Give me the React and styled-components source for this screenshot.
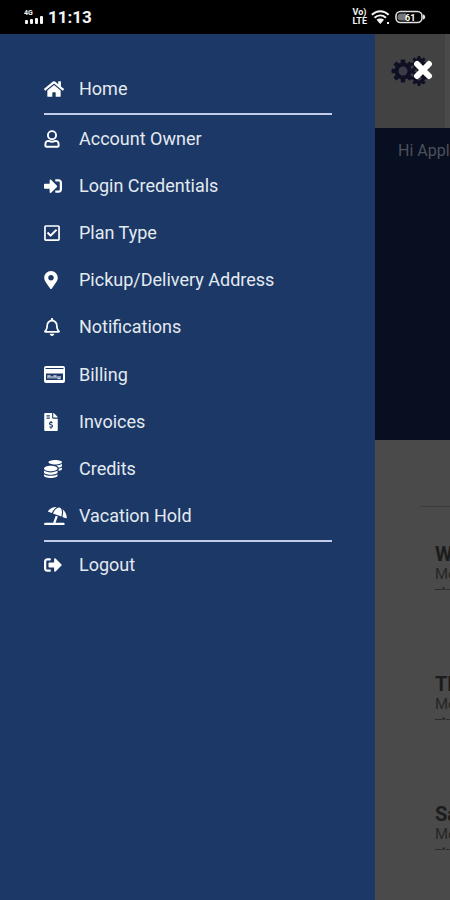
import React from "react";
import styled, { createGlobalStyle } from "styled-components";
import {
  FaHome,
  FaSignInAlt,
  FaRegCheckSquare,
  FaMapMarkerAlt,
  FaRegBell,
  FaFileInvoiceDollar,
  FaCoins,
  FaUmbrellaBeach,
  FaSignOutAlt,
} from "react-icons/fa";

const GlobalStyle = createGlobalStyle`
  * { box-sizing: border-box; }
  body {
    margin: 0;
    background: #4a4a4a;
    font-family: Roboto, "Liberation Sans", sans-serif;
  }
`;

const Screen = styled.div`
  display: flex;
  flex-direction: column;
  min-height: 100vh;
  overflow: hidden;
`;

const StatusBar = styled.header`
  display: flex;
  align-items: center;
  justify-content: space-between;
  height: 34px;
  padding: 0 24px;
  background: #000;
  color: #f4f4f4;
`;

const StatusGroup = styled.div`
  display: flex;
  align-items: center;
  gap: ${({ $gap }) => $gap}px;
`;

const Clock = styled.time`
  font-size: 17px;
  line-height: 20px;
  font-weight: 700;
`;

const SignalStack = styled.div`
  display: flex;
  flex-direction: column;
  font-size: 7px;
  line-height: 6px;
  font-weight: 700;
`;

const VolteLabel = styled.div`
  display: flex;
  flex-direction: column;
  font-size: 9px;
  line-height: 9px;
  font-weight: 700;
`;

const Stage = styled.div`
  display: flex;
  flex: 1;
`;

const Drawer = styled.nav`
  flex: 0 0 83.33%;
  padding: 31px 43px 31px 44px;
  background: #1b3867;
`;

const MenuGroup = styled.ul`
  display: grid;
  grid-auto-rows: 1fr;
  height: ${({ $height }) => $height}px;
  margin: 0;
  padding: 0;
  list-style: none;
  border: 0 solid #c3cbea;
  border-width: ${({ $ruled }) => ($ruled ? "2px 0" : "0")};
`;

const MenuLink = styled.a`
  display: flex;
  align-items: center;
  height: 100%;
  color: #e4eaf0;
  font-size: 18px;
  line-height: 24px;
  font-weight: 400;
  text-decoration: none;
  white-space: nowrap;
`;

const IconSlot = styled.span`
  display: flex;
  flex: 0 0 35px;
  color: #fff;

  svg {
    width: ${({ $width }) => $width}px;
    height: ${({ $height = 18 }) => $height}px;
  }
`;

const Page = styled.main`
  display: flex;
  flex: 1;
  flex-direction: column;
  min-width: 0;
  overflow: hidden;
  background: #4a4a4a;
`;

const Toolbar = styled.div`
  display: flex;
  align-items: flex-start;
  height: 94px;
  margin-right: 5px;
  padding: 22px 0 0 15px;
  background: #424242;
`;

const CloseButton = styled.button`
  display: flex;
  padding: 0;
  border: 0;
  background: none;
`;

const Hero = styled.section`
  height: 312px;
  padding: 13px 0 0 23px;
  background: #080f20;
  color: #4c505b;
  font-size: 16px;
  line-height: 20px;
  white-space: nowrap;
`;

const Schedule = styled.section`
  margin: 66px 0 0 45px;
  padding-top: 36px;
  border-top: 1px solid #3c3c3c;
`;

const Delivery = styled.article`
  height: 130px;
  padding-left: 15px;
  color: #262626;
  white-space: nowrap;
`;

const Day = styled.h2`
  margin: 0;
  font-size: 20px;
  line-height: 23px;
  font-weight: 700;
  color: #1c1c1c;
`;

const Detail = styled.p`
  margin: 0;
  font-size: 15px;
  line-height: 16px;
`;

const Dashes = styled.p`
  margin: 0;
  font-size: 12px;
  line-height: 15px;
`;

const SignalIcon = () => (
  <svg width="19" height="8" viewBox="0 0 19 8" fill="currentColor" aria-hidden="true">
    <rect x="1" y="4" width="3" height="4" rx="1" />
    <rect x="6" y="3" width="3" height="5" rx="1" />
    <rect x="11" y="2" width="3" height="6" rx="1" />
    <rect x="16" y="0" width="3" height="8" rx="1" />
  </svg>
);

const WifiIcon = () => (
  <svg width="20" height="15" viewBox="0 0 20 15" fill="none" stroke="currentColor" strokeWidth="2" aria-hidden="true">
    <path d="M.8 4.800C6-.1 12.500-.1 17.700 4.800M3.500 7.700c3.400-3 8-3 11.500 0" />
    <path d="M5.500 9.800c2-1.800 5.600-1.800 7.500 0L9.300 14z" fill="currentColor" stroke="none" />
    <path d="M16 13h2" />
  </svg>
);

const BatteryIcon = () => (
  <svg width="31" height="14" viewBox="0 0 31 14" aria-hidden="true">
    <rect x="1" y="1.500" width="26" height="11" rx="4.500" fill="none" stroke="#e0e0e0" strokeWidth="1.600" />
    <path d="M6 3.500h5v7H6a3.500 3.500 0 0 1 0-7z" fill="#777" />
    <path d="M28 4.500c3 .5 3 4.500 0 5z" fill="#e0e0e0" />
    <text x="10" y="10.500" fontSize="9" fontWeight="700" fill="#fff">61</text>
  </svg>
);

const OwnerIcon = () => (
  <svg viewBox="0 0 16 19" fill="none" stroke="currentColor" strokeWidth="2" strokeLinejoin="round" aria-hidden="true">
    <circle cx="8" cy="5.500" r="4.300" />
    <path d="M4.500 11.500C2.500 11.500 1 13 1 15v1.500c0 .8.4 1.200 1.200 1.200h11.600c.8 0 1.200-.4 1.200-1.200V15c0-2-1.500-3.500-3.500-3.500-2 1-5 1-7 0z" />
  </svg>
);

const CardIcon = () => (
  <svg viewBox="0 0 21 17" aria-hidden="true">
    <path fill="currentColor" fillRule="evenodd" d="M2 0h17a2 2 0 0 1 2 2v13a2 2 0 0 1-2 2H2a2 2 0 0 1-2-2V2a2 2 0 0 1 2-2zM1.500 2v1h18V2zM2 7.500v6.500h17V7.500z" />
    <path d="M4 12.500V10h2v2.500M8 12.500V10M10 12.500V10h2v2.500M14 10v2.500h2V10" fill="none" stroke="#cbd4e2" strokeWidth="1.300" />
  </svg>
);

const teeth = [0, 45, 90, 135, 180, 225, 270, 315];

const Gear = ({ x, y, r, hub }) => (
  <g transform={`translate(${x} ${y})`}>
    <circle r={r * 0.74} fill="#101024" />
    {teeth.map((angle) => (
      <rect key={angle} x={-r * 0.2} y={-r} width={r * 0.4} height={r * 0.5} rx="1" fill="#101024" transform={`rotate(${angle})`} />
    ))}
    <circle r={hub} fill="#3b3b46" />
  </g>
);

const CloseGears = () => (
  <svg width="43" height="32" viewBox="0 0 43 32" aria-hidden="true">
    <Gear x={13} y={15} r={11.5} hub={4.5} />
    <Gear x={29} y={8} r={8} hub={2.5} />
    <Gear x={29} y={22} r={8} hub={2.5} />
    <path d="m27 8 12 12M39 8 27 20" stroke="#fff" strokeWidth="6" strokeLinecap="round" />
  </svg>
);

const groups = [
  { height: 48, items: [{ label: "Home", Icon: FaHome, width: 20 }] },
  {
    height: 429,
    ruled: true,
    items: [
      { label: "Account Owner", Icon: OwnerIcon, width: 16 },
      { label: "Login Credentials", Icon: FaSignInAlt, width: 18 },
      { label: "Plan Type", Icon: FaRegCheckSquare, width: 16 },
      { label: "Pickup/Delivery Address", Icon: FaMapMarkerAlt, width: 14 },
      { label: "Notifications", Icon: FaRegBell, width: 16 },
      { label: "Billing", Icon: CardIcon, width: 21, iconHeight: 17 },
      { label: "Invoices", Icon: FaFileInvoiceDollar, width: 14 },
      { label: "Credits", Icon: FaCoins, width: 18 },
      { label: "Vacation Hold", Icon: FaUmbrellaBeach, width: 23 },
    ],
  },
  { height: 46, items: [{ label: "Logout", Icon: FaSignOutAlt, width: 18 }] },
];

const days = ["Wednesday", "Thursday", "Saturday"];

export default function App() {
  return (
    <Screen>
      <GlobalStyle />
      <StatusBar>
        <StatusGroup $gap={5}>
          <SignalStack>
            4G
            <SignalIcon />
          </SignalStack>
          <Clock>11:13</Clock>
        </StatusGroup>
        <StatusGroup $gap={4}>
          <VolteLabel>
            <span>Vo)</span>
            <span>LTE</span>
          </VolteLabel>
          <WifiIcon />
          <BatteryIcon />
        </StatusGroup>
      </StatusBar>
      <Stage>
        <Drawer aria-label="Account">
          {groups.map(({ height, ruled, items }) => (
            <MenuGroup key={items[0].label} $height={height} $ruled={ruled}>
              {items.map(({ label, Icon, width, iconHeight }) => (
                <li key={label}>
                  <MenuLink href="#">
                    <IconSlot $width={width} $height={iconHeight}>
                      <Icon />
                    </IconSlot>
                    {label}
                  </MenuLink>
                </li>
              ))}
            </MenuGroup>
          ))}
        </Drawer>
        <Page>
          <Toolbar>
            <CloseButton type="button" aria-label="Close menu">
              <CloseGears />
            </CloseButton>
          </Toolbar>
          <Hero>Hi Apple</Hero>
          <Schedule>
            {days.map((day) => (
              <Delivery key={day}>
                <Day>{day}</Day>
                <Detail>Morning</Detail>
                <Dashes>--•--•--</Dashes>
              </Delivery>
            ))}
          </Schedule>
        </Page>
      </Stage>
    </Screen>
  );
}
